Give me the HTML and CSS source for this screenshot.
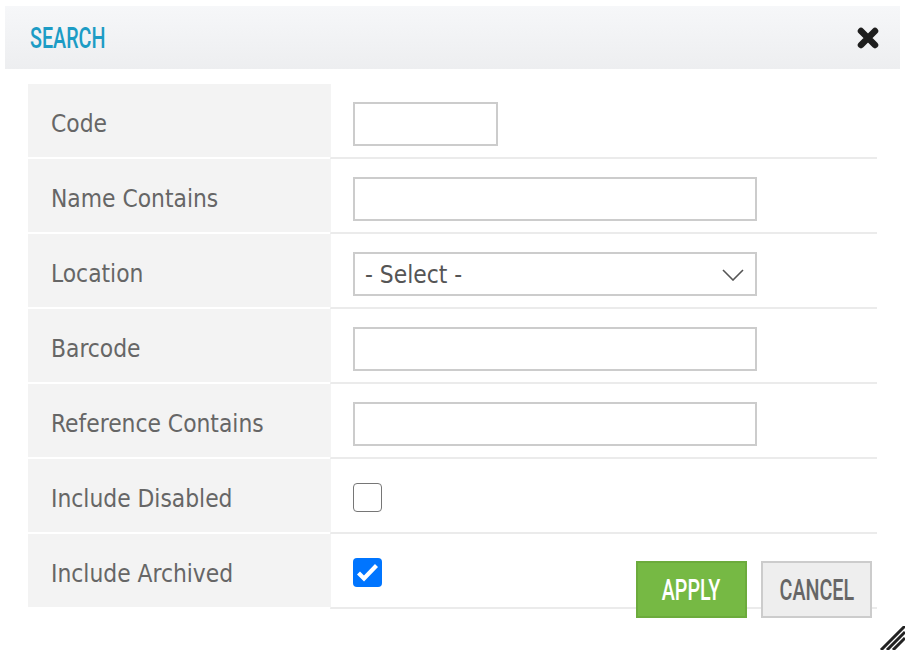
FILE: index.html
```html
<!DOCTYPE html>
<html>
<head>
<meta charset="utf-8">
<title>Search</title>
<link rel="stylesheet" href="styles.css">
</head>
<body>
<div class="dialog">
  <div class="header">
    <span class="title">SEARCH</span>
    <svg class="close" width="22" height="22" viewBox="0 0 22 22">
      <path d="M4 4 L18 18 M18 4 L4 18" stroke="#1e1e1e" stroke-width="6.5" stroke-linecap="round" fill="none"/>
    </svg>
  </div>
  <div class="form">
    <div class="row">
      <div class="label">Code</div>
      <div class="value"><span class="input short"></span></div>
    </div>
    <div class="row">
      <div class="label">Name Contains</div>
      <div class="value"><span class="input"></span></div>
    </div>
    <div class="row">
      <div class="label">Location</div>
      <div class="value"><span class="input select"><span class="select-text">- Select -</span>
        <svg class="chev" width="22" height="12" viewBox="0 0 22 12"><path d="M1 1 L11 11 L21 1" stroke="#555" stroke-width="1.6" fill="none"/></svg></span></div>
    </div>
    <div class="row">
      <div class="label">Barcode</div>
      <div class="value"><span class="input"></span></div>
    </div>
    <div class="row">
      <div class="label">Reference Contains</div>
      <div class="value"><span class="input"></span></div>
    </div>
    <div class="row">
      <div class="label">Include Disabled</div>
      <div class="value"><span class="check"></span></div>
    </div>
    <div class="row">
      <div class="label">Include Archived</div>
      <div class="value"><span class="check checked"><svg width="29" height="29" viewBox="0 0 29 29"><path d="M5.5 15 L11 20.5 L23.5 7.5" stroke="#fff" stroke-width="4.2" fill="none" stroke-linecap="butt" stroke-linejoin="miter"/></svg></span></div>
    </div>
  </div>
  <div class="buttons">
    <span class="btn apply"><span class="btn-text">APPLY</span></span>
    <span class="btn cancel"><span class="btn-text">CANCEL</span></span>
  </div>
  <svg class="resize" width="26" height="24" viewBox="0 0 26 24">
    <path d="M2 24 L26 0 M8 24 L26 6 M14 24 L26 12" stroke="#222" stroke-width="3" fill="none"/>
  </svg>
</div>
</body>
</html>
```
FILE: styles.css
```css
html, body {
  margin: 0;
  padding: 0;
  background: #fff;
}
.dialog {
  position: relative;
  width: 905px;
  height: 650px;
  padding-top: 6px;
  box-sizing: border-box;
  overflow: hidden;
}
.header {
  margin: 0 5px;
  height: 63px;
  background: linear-gradient(#f6f7f9, #edeef0);
  display: flex;
  align-items: center;
  justify-content: space-between;
  padding: 0 21px 0 25px;
}
.title {
  display: inline-block;
  font-family: Roboto, "Liberation Sans", sans-serif;
  font-weight: 500;
  font-size: 29px;
  color: #1c9cc5;
  transform: scaleX(0.68);
  transform-origin: left center;
}
.close {
  display: block;
}
.form {
  margin: 15px 28px 0 28px;
}
.row {
  display: grid;
  grid-template-columns: 302px 1fr;
  height: 75px;
}
.label {
  background: #f3f3f3;
  height: 73px;
  box-sizing: border-box;
  padding: 6px 0 0 23px;
  display: flex;
  align-items: center;
  font-family: "DejaVu Sans Condensed", "DejaVu Sans", sans-serif;
  font-stretch: semi-condensed;
  font-size: 24.3px;
  color: #666;
}
.value {
  border-bottom: 2px solid #ebebeb;
  border-left: 1px solid #f4f4f4;
  padding: 18px 0 0 22px;
  box-sizing: border-box;
}
.input {
  display: block;
  width: 404px;
  height: 44px;
  box-sizing: border-box;
  border: 2px solid #cccccc;
  background: #fff;
}
.input.short {
  width: 145px;
}
.select {
  display: flex;
  align-items: center;
  justify-content: space-between;
  padding: 0 11px 0 10px;
}
.select-text {
  font-family: "DejaVu Sans Condensed", "DejaVu Sans", sans-serif;
  font-stretch: semi-condensed;
  font-size: 24.3px;
  color: #555;
}
.chev {
  display: block;
  margin-top: 2px;
}
.check {
  display: block;
  width: 29px;
  height: 29px;
  box-sizing: border-box;
  margin-top: 6px;
  border: 1.5px solid #767676;
  border-radius: 4px;
  background: #fff;
}
.check.checked {
  border: none;
  background: #0075ff;
}
.check svg {
  display: block;
}
.buttons {
  position: absolute;
  top: 561px;
  left: 636px;
  display: flex;
  gap: 14px;
}
.btn {
  display: flex;
  align-items: center;
  justify-content: center;
  width: 111px;
  height: 57px;
  box-sizing: border-box;
  border: 2px solid;
  font-family: Roboto, "Liberation Sans", sans-serif;
  font-weight: 500;
  font-size: 29px;
  overflow: hidden;
}
.btn-text {
  display: inline-block;
  transform: scaleX(0.68);
  margin-top: 1px;
}
.btn.apply {
  background: #76b944;
  border-color: #6cab3c;
  color: #fff;
}
.btn.cancel {
  background: #eeeeee;
  border-color: #cccccc;
  color: #666;
}
.resize {
  position: absolute;
  right: 0;
  bottom: 0;
  display: block;
}
```
